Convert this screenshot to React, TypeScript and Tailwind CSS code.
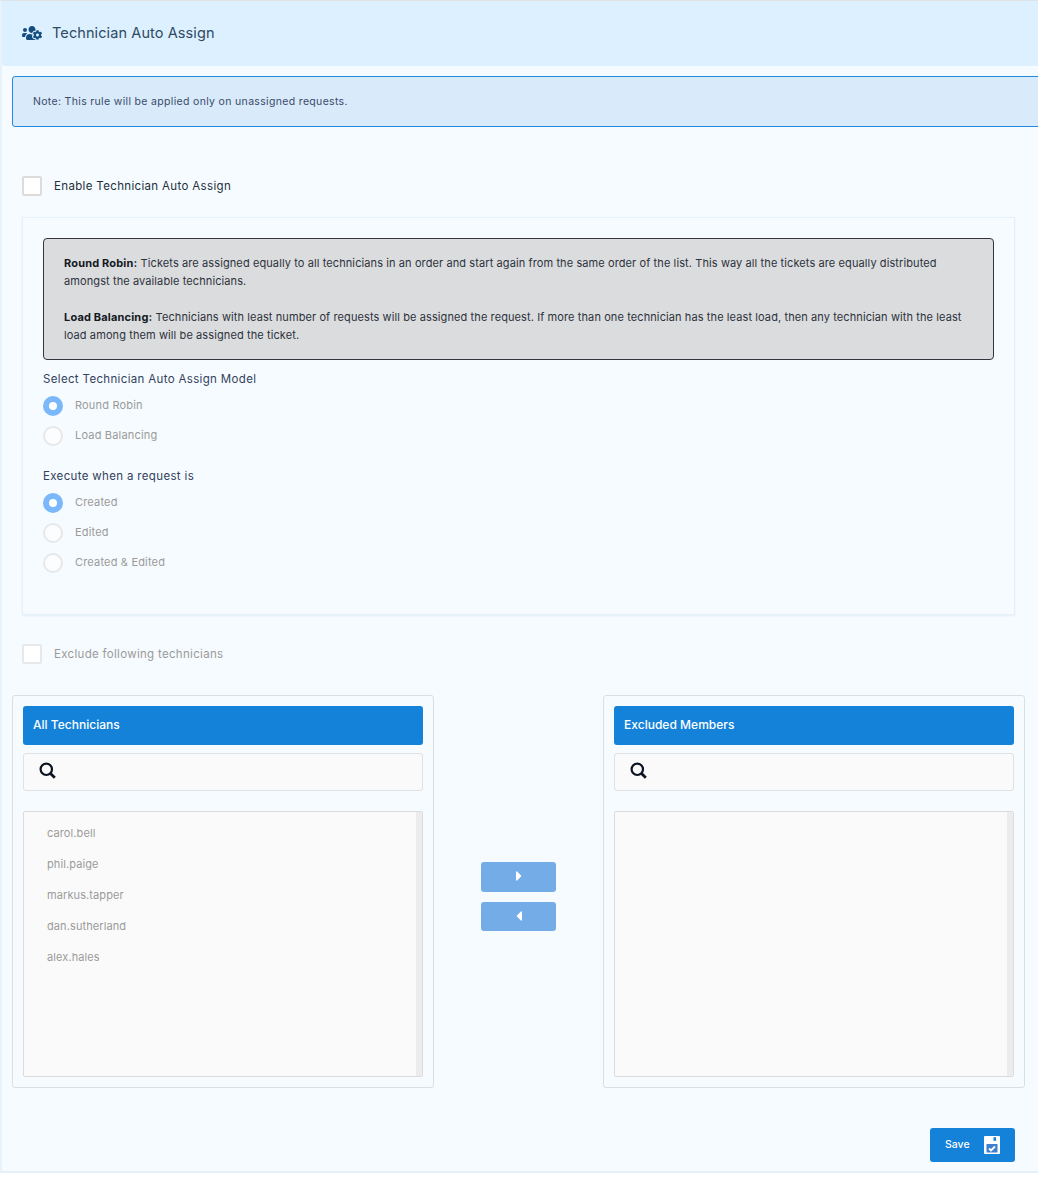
import { FaUsersCog, FaCaretRight, FaCaretLeft } from "react-icons/fa";

function Radio({ on, label }: { on?: boolean; label: string }) {
  return (
    <div className="flex h-[30px] items-center">
      {on ? (
        <span className="flex h-5 w-5 items-center justify-center rounded-full bg-[#7ab8fb]">
          <span className="h-2 w-2 rounded-full bg-white" />
        </span>
      ) : (
        <span className="h-5 w-5 rounded-full border-2 border-[#e6e8ea] bg-[#fbfdff]" />
      )}
      <span className="ml-3 pb-[2px] text-[11px] tracking-[0.18px] text-[#9a9a9a]">{label}</span>
    </div>
  );
}

function Search() {
  return (
    <svg width="17" height="17" viewBox="0 0 17 17" fill="none" stroke="#0c1420" strokeWidth="2.2">
      <circle cx="7.3" cy="7.3" r="5.7" />
      <path d="M11.500 11.500 15.800 15.800" strokeWidth="2.800" />
    </svg>
  );
}

function ListPanel({ title, items }: { title: string; items: string[] }) {
  return (
    <div className="h-[393px] w-[422px] rounded-[3px] border border-[#dcdfe2] px-[10px] pt-[10px]">
      <div className="flex h-[39px] items-center rounded-[3px] bg-[#1482d9] pb-[1px] pl-[10px] text-[12px] font-medium tracking-[0.02px] text-white">
        {title}
      </div>
      <div className="mt-2 flex h-[38px] items-center rounded-[3px] border border-[#dfe1e3] bg-[#fafafa] pb-[4px] pl-[15px]">
        <Search />
      </div>
      <div className="mt-5 flex h-[266px] rounded-[2px] border border-[#dcdcdc] bg-[#fafafa]">
        <div className="flex-1 pl-[23px] pt-[6px]">
          {items.map((t) => (
            <div key={t} className="flex h-[31px] items-center text-[11px] tracking-[0.1px] text-[#9a9a9a]">
              {t}
            </div>
          ))}
        </div>
        <div className="w-[6px] bg-[#ececec]" />
      </div>
    </div>
  );
}

export default function App() {
  return (
    <div
      className="h-[1179px] w-[1038px] overflow-hidden bg-white"
      style={{ fontFamily: "Inter, 'Liberation Sans', sans-serif" }}
    >
      <div className="h-[1173px] border-t border-l-2 border-b-2 border-t-[#dfe3e6] border-l-[#e8f2fa] border-b-[#e6f0f9] bg-[#f6fbff]">
        <div className="flex h-[65px] items-center rounded-bl-[3px] bg-[#dcf0ff] pb-[1px] pl-5">
          <FaUsersCog className="h-[20px] w-[20px] text-[#164d80]" />
          <span className="ml-[10px] pb-[1px] text-[14.5px] tracking-[0.1px] text-[#2f4a63]">Technician Auto Assign</span>
        </div>

        <div className="ml-[10px] mt-[10px] flex h-[51px] w-[1100px] items-center rounded-[3px] border border-[#1f8ae0] bg-[#d9eafa] pl-5 text-[10.5px] tracking-[0.33px] text-[#3a4a6b]">
          Note: This rule will be applied only on unassigned requests.
        </div>

        <div className="ml-5 mt-[49px] flex h-5 items-center">
          <span className="h-5 w-5 rounded-[2px] border-2 border-[#dcdcdc] bg-white" />
          <span className="ml-3 pt-[2px] text-[11.5px] tracking-[0.34px] text-[#22303c]">Enable Technician Auto Assign</span>
        </div>

        <div className="ml-5 mt-[21px] h-[398px] w-[993px] border border-[#e4f0fa] px-5 pt-5 shadow-[0_1px_2px_#e2edf7]">
          <div className="h-[122px] w-[951px] rounded-[4px] border border-[#33373d] bg-[#dbdcde] px-5 pt-[15px] text-[11px] leading-[18px] tracking-[0.1px] text-[#2c323c]">
            <p>
              <b className="font-bold tracking-[0.17px] text-[#14181e]">Round Robin:</b> Tickets are assigned equally to all technicians in an order and
              start again from the same order of the list. This way all the tickets are equally distributed amongst the
              available technicians.
            </p>
            <p className="mt-[18px]">
              <b className="font-bold tracking-[0.17px] text-[#14181e]">Load Balancing:</b> Technicians with least number of requests will be assigned the
              request. If more than one technician has the least load, then any technician with the least load among them
              will be assigned the ticket.
            </p>
          </div>
          <div className="mt-[11px] text-[11.5px] leading-[16px] tracking-[0.34px] text-[#33415c]">Select Technician Auto Assign Model</div>
          <div className="mt-[4px]">
            <Radio on label="Round Robin" />
            <Radio label="Load Balancing" />
          </div>
          <div className="mt-[17px] text-[11.5px] leading-[16px] tracking-[0.34px] text-[#33415c]">Execute when a request is</div>
          <div className="mt-[4px]">
            <Radio on label="Created" />
            <Radio label="Edited" />
            <Radio label="Created & Edited" />
          </div>
        </div>

        <div className="ml-5 mt-[29px] flex h-5 items-center">
          <span className="h-5 w-5 rounded-[2px] border-2 border-[#e6e8ea] bg-white" />
          <span className="ml-3 pt-[2px] text-[11.5px] tracking-[0.31px] text-[#9a9a9a]">Exclude following technicians</span>
        </div>

        <div className="ml-[10px] mt-[31px] flex w-[1013px]">
          <ListPanel title="All Technicians" items={["carol.bell", "phil.paige", "markus.tapper", "dan.sutherland", "alex.hales"]} />
          <div className="flex w-[169px] flex-col items-center pt-[167px]">
            <button className="flex h-[30px] w-[75px] items-center justify-center rounded-[3px] bg-[#74ace7] pb-[2px] text-white">
              <FaCaretRight className="h-[16px] w-[16px]" />
            </button>
            <button className="mt-[10px] flex h-[29px] w-[75px] items-center justify-center rounded-[3px] bg-[#74ace7] pb-[2px] text-white">
              <FaCaretLeft className="h-[16px] w-[16px]" />
            </button>
          </div>
          <ListPanel title="Excluded Members" items={[]} />
        </div>

        <div className="mt-[40px] flex w-[1013px] justify-end">
          <button className="flex h-[34px] w-[85px] items-center rounded-[3px] bg-[#1482d9] pl-[15px] text-[10.5px] font-medium text-white">
            Save
            <svg className="ml-[14px]" width="16" height="18" viewBox="0 0 16 18">
              <path
                fill="#fff"
                d="M1 0H15a1 1 0 0 1 1 1V17a1 1 0 0 1-1 1H1a1 1 0 0 1-1-1V1a1 1 0 0 1 1-1Z"
              />
              <rect x="9.500" y="1.200" width="2.600" height="3.600" fill="#1482d9" />
              <rect x="2.500" y="8" width="11" height="8.500" fill="#3f7fd0" />
              <path d="M5 12.500 7 14.500 11 10.500" fill="none" stroke="#fff" strokeWidth="1.800" />
            </svg>
          </button>
        </div>
      </div>
    </div>
  );
}
